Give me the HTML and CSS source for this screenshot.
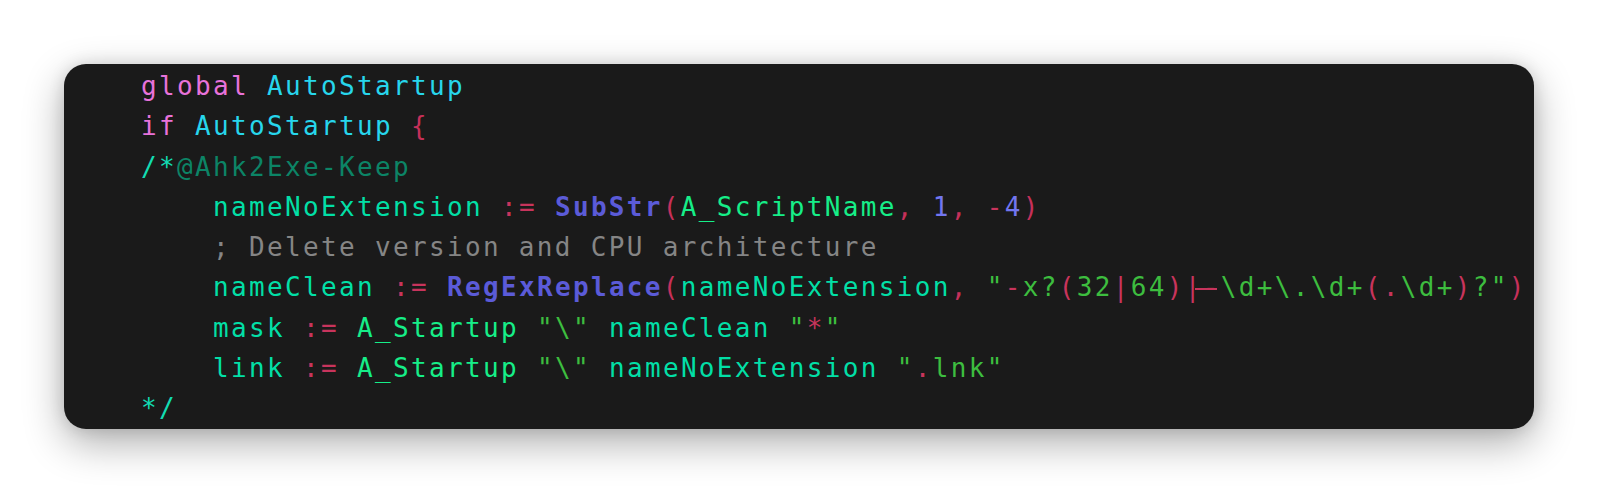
FILE: index.html
```html
<!DOCTYPE html>
<html>
<head>
<meta charset="utf-8">
<link rel="stylesheet" href="styles.css">
</head>
<body>
<div class="stage">
  <div class="window">
    <pre class="code"><span class="line"><span class="kw">global</span> <span class="glob">AutoStartup</span></span>
<span class="line"><span class="kw">if</span> <span class="glob">AutoStartup</span> <span class="punc">{</span></span>
<span class="line"><span class="cm-mark">/*</span><span class="directive">@Ahk2Exe-Keep</span></span>
<span class="line">    <span class="var">nameNoExtension</span> <span class="op">:=</span> <span class="fn">SubStr</span><span class="punc">(</span><span class="builtin">A_ScriptName</span><span class="punc">,</span> <span class="num">1</span><span class="punc">,</span> <span class="op">-</span><span class="num">4</span><span class="punc">)</span></span>
<span class="line">    <span class="comment">; Delete version and CPU architecture</span></span>
<span class="line">    <span class="var">nameClean</span> <span class="op">:=</span> <span class="fn">RegExReplace</span><span class="punc">(</span><span class="var">nameNoExtension</span><span class="punc">,</span> <span class="str">"</span><span class="rx">-</span><span class="str">x?</span><span class="rx">(</span><span class="str">32</span><span class="rx">|</span><span class="str">64</span><span class="rx">)|<span class="lig">-</span></span><span class="str">\d+\.\d+</span><span class="rx">(.</span><span class="str">\d+</span><span class="rx">)</span><span class="str">?"</span><span class="punc">)</span></span>
<span class="line">    <span class="var">mask</span> <span class="op">:=</span> <span class="builtin">A_Startup</span> <span class="str">"\"</span> <span class="var">nameClean</span> <span class="str">"</span><span class="rx">*</span><span class="str">"</span></span>
<span class="line">    <span class="var">link</span> <span class="op">:=</span> <span class="builtin">A_Startup</span> <span class="str">"\"</span> <span class="var">nameNoExtension</span> <span class="str">"</span><span class="rx">.</span><span class="str">lnk"</span></span>
<span class="line"><span class="cm-mark">*/</span></span></pre>
  </div>
</div>
</body>
</html>
```

FILE: styles.css
```css
html, body {
  margin: 0;
  padding: 0;
  background: #ffffff;
}

.stage {
  width: 1608px;
  height: 504px;
  padding: 64px 0 0 64px;
  box-sizing: border-box;
}

.window {
  width: 1470px;
  height: 365px;
  background: #1a1a1a;
  border-radius: 22px;
  box-shadow: 0 14px 40px rgba(0, 0, 0, 0.32), 0 0 16px rgba(0, 0, 0, 0.12);
  overflow: hidden;
  box-sizing: border-box;
  padding: 2px 0 0 77px;
}

.code {
  margin: 0;
  font-family: "DejaVu Sans Mono", monospace;
  font-size: 26px;
  letter-spacing: 2.34px;
  line-height: 40.3px;
  white-space: pre;
  color: #d0d0d0;
}

.kw { color: #e872da; }
.glob { color: #27d6ec; }
.punc { color: #c6305a; }
.op { color: #c8345c; }
.cm-mark { color: #12dcb2; }
.directive { color: #0c8466; }
.var { color: #02dfa6; }
.fn { color: #5b5bd8; font-weight: bold; }
.builtin { color: #16ee88; }
.num { color: #7276f0; }
.comment { color: #858585; }
.str { color: #3dbd3f; }
.rx { color: #c8345c; }

.lig {
  position: relative;
}

.lig::before {
  content: "";
  position: absolute;
  left: -8px;
  width: 22px;
  bottom: 12.6px;
  height: 2px;
  background: currentColor;
}
```
